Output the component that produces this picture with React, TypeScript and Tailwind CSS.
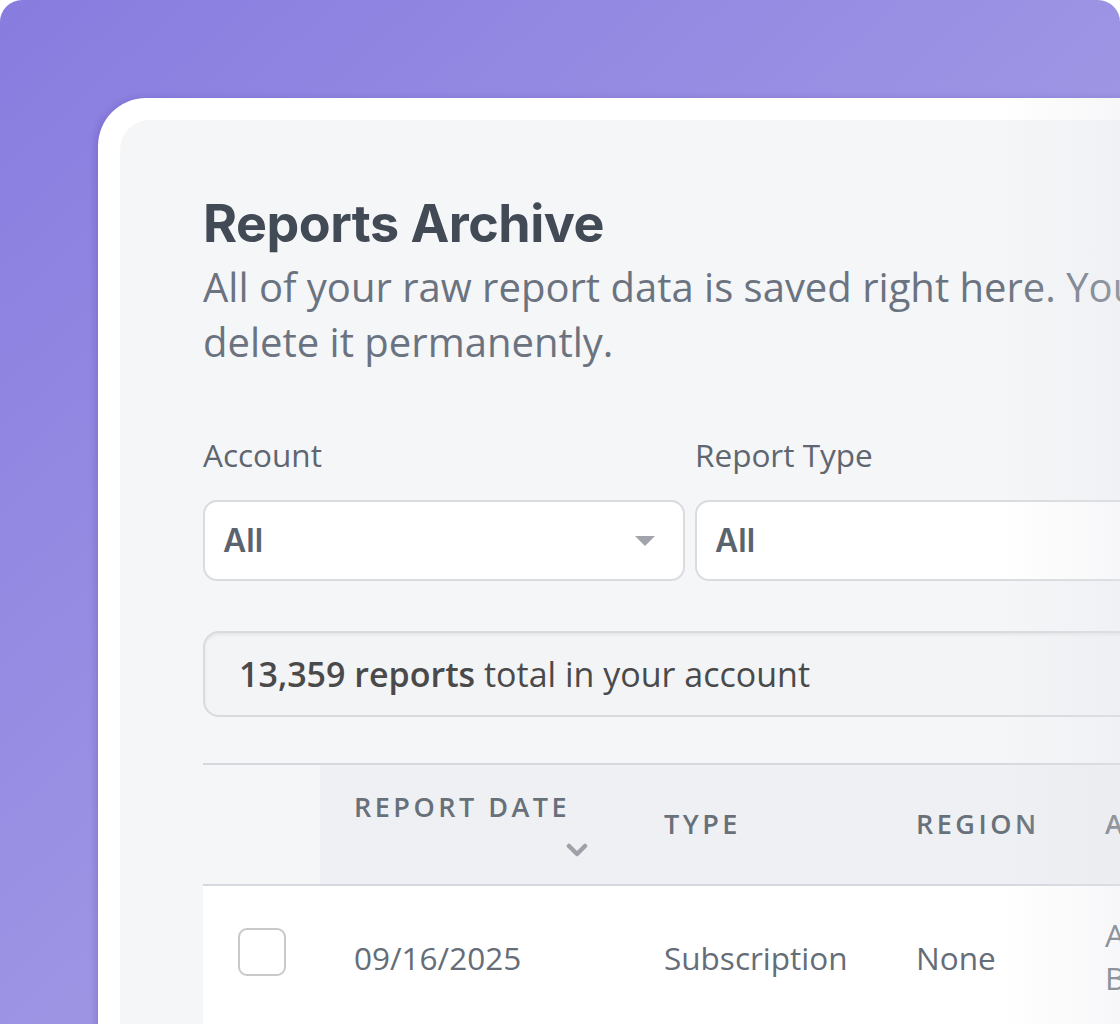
import React from 'react';

const openSans = { fontFamily: '"Open Sans", "Liberation Sans", sans-serif' };
const inter = { fontFamily: 'Inter, "Liberation Sans", sans-serif' };

const FilterSelect: React.FC<{ label: string; value: string }> = ({ label, value }) => (
  <div className="w-[482px] shrink-0">
    <label className="block text-[31.5px] leading-[40px] text-[#5f6670] mb-[25px]" style={openSans}>
      {label}
    </label>
    <div className="h-[81px] bg-white border-2 border-[#d9dbdf] rounded-[14px] flex items-center justify-between pl-[18px] pr-[28px]">
      <span className="text-[32px] font-semibold text-[#5b636e]" style={inter}>{value}</span>
      <svg width="20" height="10" viewBox="0 0 20 10">
        <path d="M0 0 L20 0 L10 10 Z" fill="#a1a5ab" />
      </svg>
    </div>
  </div>
);

const App: React.FC = () => {
  return (
    <div className="w-[1120px] h-[1024px] bg-white overflow-hidden">
      <div className="relative w-[1120px] h-[1024px] rounded-t-[22px] bg-gradient-to-br from-[#887cdf] via-[#9d93e4] to-[#b2aae9] pl-[98px] pt-[98px] overflow-hidden">
        <div className="relative w-[1200px] h-[1000px] bg-white rounded-tl-[48px] p-[22px] shadow-[-3px_0_6px_rgba(60,40,140,0.18)]">
          <div className="h-full bg-[#f5f6f8] rounded-tl-[30px] pl-[83px] pt-[74px]">
            <h1 className="text-[52px] leading-[60px] font-bold tracking-[-0.5px] text-[#414a55]" style={inter}>
              Reports Archive
            </h1>
            <p className="mt-[5px] text-[40px] leading-[55px] text-[#6b7380] whitespace-nowrap" style={openSans}>
              All of your raw report data is saved right here. You can download it or
              <br />
              delete it permanently.
            </p>

            <div className="mt-[66px] flex gap-[10px]">
              <FilterSelect label="Account" value="All" />
              <FilterSelect label="Report Type" value="All" />
            </div>

            <div
              className="mt-[50px] w-[1000px] h-[86px] bg-[#f3f4f6] border-2 border-[#d8dadd] rounded-[16px] shadow-[inset_0_2px_3px_rgba(0,0,0,0.06)] flex items-center pl-[34px] text-[34px] text-[#4a4a4a] whitespace-nowrap"
              style={openSans}
            >
              <span className="font-semibold">13,359 reports</span>
              <span>&nbsp;total in your account</span>
            </div>

            {/* table */}
            <div className="mt-[46px] w-[1000px]" style={openSans}>
              <div className="flex h-[123px] border-y-2 border-[#d6d8dd]">
                <div className="w-[117px] shrink-0" />
                <div className="flex flex-1 bg-[#eff0f3] text-[27px] font-semibold tracking-[3.5px] text-[#68707a] whitespace-nowrap">
                  <div className="w-[310px] shrink-0 pl-[34px] pt-[22px]">
                    <div className="inline-flex flex-col items-end">
                      <span className="leading-[36px]">REPORT DATE</span>
                      <svg width="22" height="15" viewBox="0 0 22 15" className="mt-[18px] mr-[-18px]">
                        <path d="M3 3 L11 11 L19 3" fill="none" stroke="#9ea2a8" strokeWidth="4.5" strokeLinecap="round" strokeLinejoin="round" />
                      </svg>
                    </div>
                  </div>
                  <div className="w-[252px] shrink-0 pl-[34px] flex items-center">TYPE</div>
                  <div className="w-[189px] shrink-0 pl-[34px] flex items-center">REGION</div>
                  <div className="flex-1 pl-[34px] flex items-center">ACCOUNT</div>
                </div>
              </div>
              <div className="flex h-[160px] bg-white text-[31.5px] text-[#656d78] whitespace-nowrap">
                <div className="w-[117px] shrink-0 flex justify-center pt-[42px]">
                  <div className="w-[48px] h-[48px] border-2 border-[#c9c9c9] rounded-[9px] bg-white" />
                </div>
                <div className="w-[310px] shrink-0 pl-[34px] pt-[50px] leading-[44px]">09/16/2025</div>
                <div className="w-[252px] shrink-0 pl-[34px] pt-[50px] leading-[44px]">Subscription</div>
                <div className="w-[189px] shrink-0 pl-[34px] pt-[50px] leading-[44px]">None</div>
                <div className="flex-1 pl-[34px] pt-[27px] leading-[43px]">
                  Acme
                  <br />
                  Billing
                </div>
              </div>
            </div>
          </div>
          {/* soft fade on the right edge of the card */}
          <div className="pointer-events-none absolute top-0 left-[900px] w-[130px] h-full bg-gradient-to-r from-transparent to-[rgba(230,231,236,0.35)]" />
        </div>
      </div>
    </div>
  );
};

export default App;
